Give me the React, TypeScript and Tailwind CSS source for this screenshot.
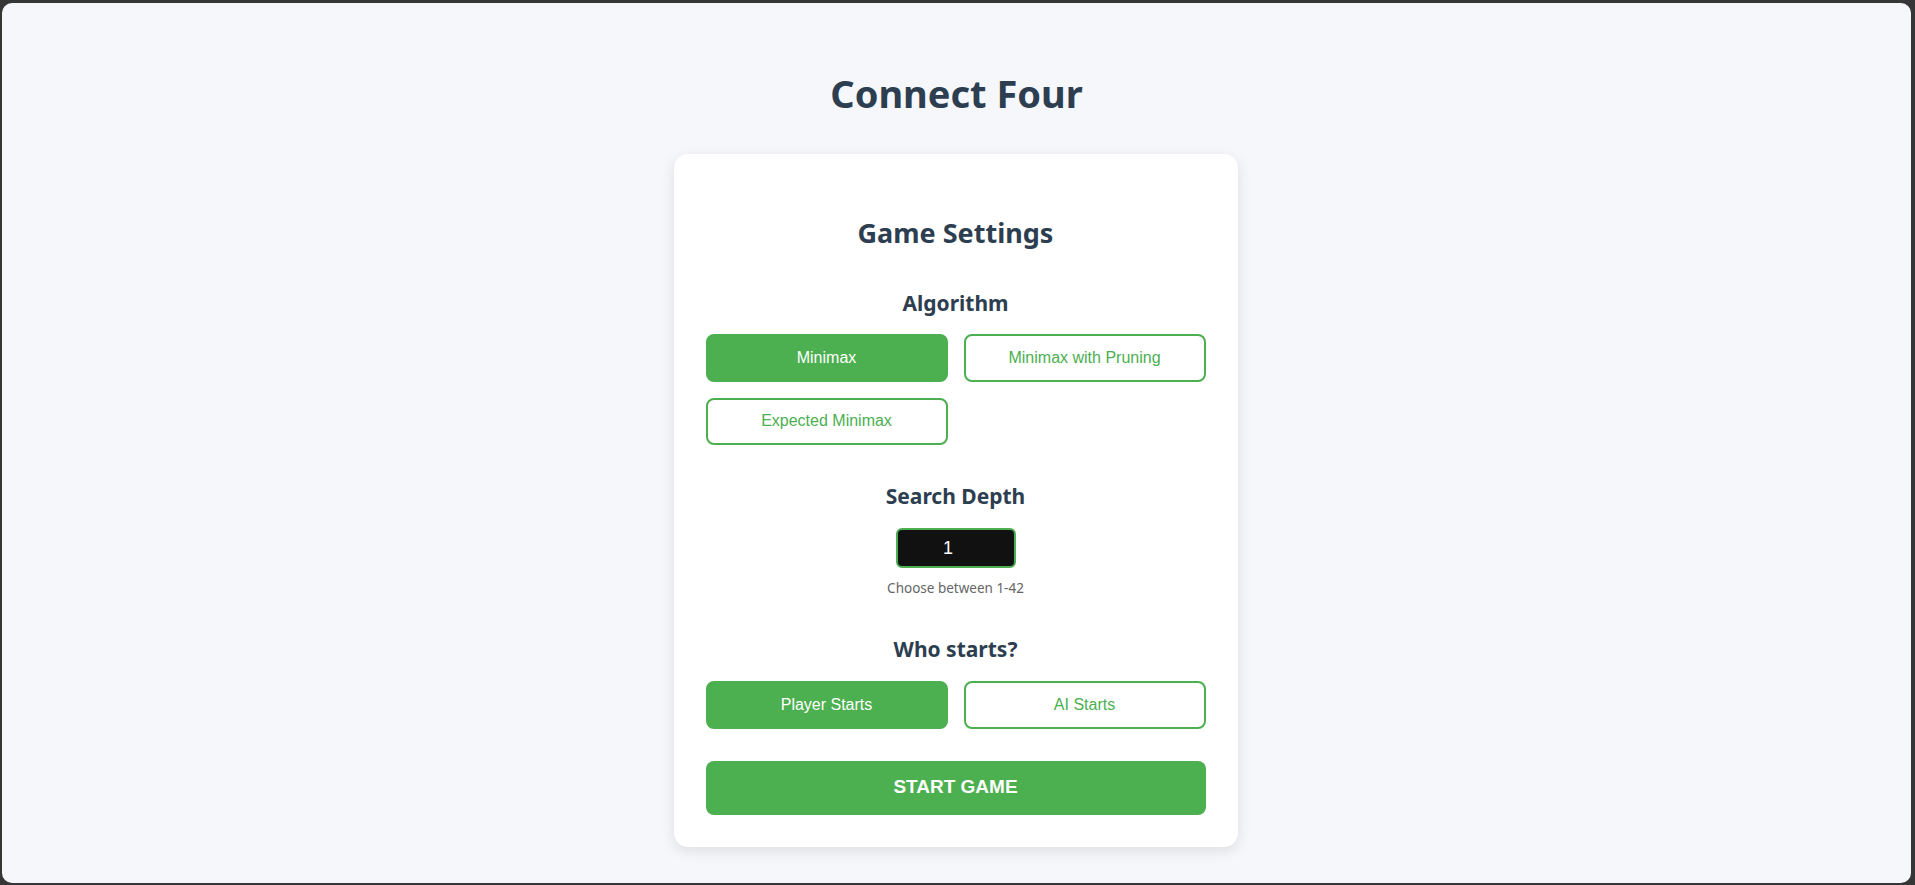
import React, { useState } from 'react';

const heading = "font-['Noto_Sans',sans-serif] font-bold text-[#2c3e50] text-center";
const btnBase = "h-[47.5px] rounded-lg border-2 border-[#4caf50] font-['Liberation_Sans',Arial,sans-serif] text-[16px]";

const algorithms = ['Minimax', 'Minimax with Pruning', 'Expected Minimax'];

export default function App() {
  const [algorithm, setAlgorithm] = useState('Minimax');
  const [depth, setDepth] = useState('1');
  const [starter, setStarter] = useState<'player' | 'ai'>('player');

  const choice = (active: boolean) =>
    active ? `${btnBase} bg-[#4caf50] text-white` : `${btnBase} bg-white text-[#4caf50]`;

  return (
    <div className="h-screen w-full bg-[#363636] pt-[3px] pl-[2px] pr-[4px] pb-[2px]">
      <div className="flex h-full flex-col items-center rounded-[10px] bg-[#f5f7fa]">
        {/* Title */}
        <h1 className={`${heading} mt-[66px] text-[38px] leading-[48px]`}>Connect Four</h1>

        {/* Settings card */}
        <div className="mt-[37px] w-[564px] -translate-x-px rounded-[14px] bg-white px-8 pt-[61px] pb-8 shadow-[0_4px_14px_rgba(0,0,0,0.1)]">
          <h2 className={`${heading} text-[27px] leading-[36px]`}>Game Settings</h2>

          <h3 className={`${heading} mt-[38px] text-[21px] leading-[28px]`}>Algorithm</h3>
          <div className="mt-[17px] grid grid-cols-2 gap-4">
            {algorithms.map((a) => (
              <button key={a} onClick={() => setAlgorithm(a)} className={choice(algorithm === a)}>
                {a}
              </button>
            ))}
          </div>

          <h3 className={`${heading} mt-[37px] text-[21px] leading-[28px]`}>Search Depth</h3>
          <div className="mt-[18px] flex justify-center">
            <input
              type="text"
              value={depth}
              onChange={(e) => setDepth(e.target.value)}
              className="h-10 w-[120px] rounded-md border-2 border-[#4caf50] bg-[#111111] pr-[15px] text-center font-['Liberation_Sans',Arial,sans-serif] text-[18px] text-white outline-none"
            />
          </div>
          <p className="mt-[10px] text-center font-['Noto_Sans',sans-serif] text-[13.5px] leading-[20px] text-[#666666]">
            Choose between 1-42
          </p>

          <h3 className={`${heading} mt-[37px] text-[21px] leading-[28px]`}>Who starts?</h3>
          <div className="mt-[18px] grid grid-cols-2 gap-4">
            <button onClick={() => setStarter('player')} className={choice(starter === 'player')}>
              Player Starts
            </button>
            <button onClick={() => setStarter('ai')} className={choice(starter === 'ai')}>
              AI Starts
            </button>
          </div>

          <button className="mt-8 h-[54px] w-full rounded-lg bg-[#4caf50] font-['Liberation_Sans',Arial,sans-serif] text-[19px] font-bold text-white">
            START GAME
          </button>
        </div>
      </div>
    </div>
  );
}
